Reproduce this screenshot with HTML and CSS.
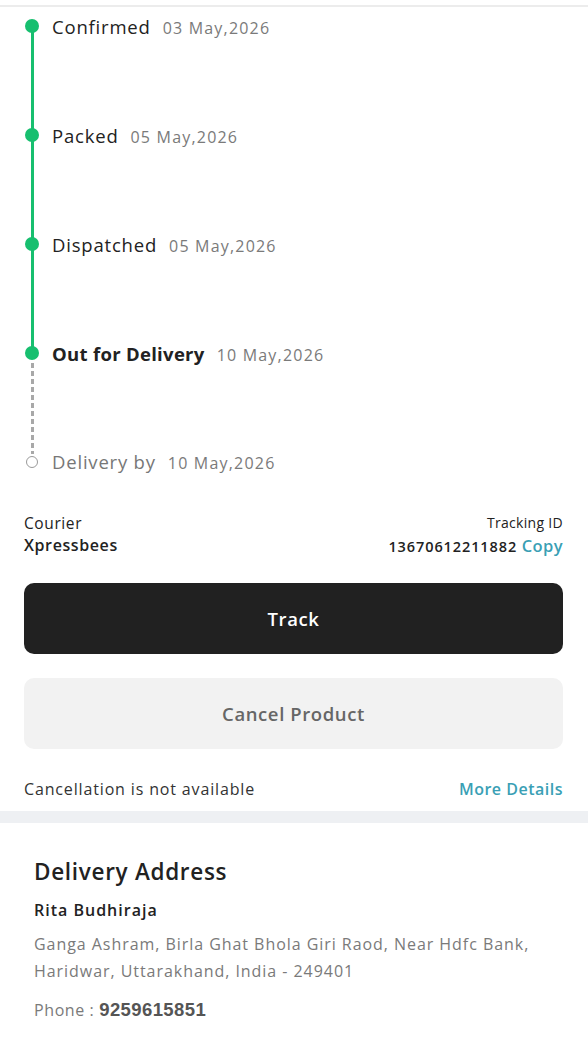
FILE: index.html
```html
<!DOCTYPE html>
<html lang="en">
<head>
    <meta charset="UTF-8">
    <meta name="viewport" content="width=device-width, initial-scale=1.0">
    <title>Order Tracking</title>
    <link rel="stylesheet" href="styles.css">
</head>

<body>
    <div class="topline"></div>

    <!-- Timeline -->
    <section class="timeline">
        <div class="step done">
            <div class="rail"><span class="dot"></span><span class="seg"></span></div>
            <div class="step-text"><span class="label">Confirmed</span><span class="date">03 May,2026</span></div>
        </div>
        <div class="step done">
            <div class="rail"><span class="dot"></span><span class="seg"></span></div>
            <div class="step-text"><span class="label">Packed</span><span class="date">05 May,2026</span></div>
        </div>
        <div class="step done">
            <div class="rail"><span class="dot"></span><span class="seg"></span></div>
            <div class="step-text"><span class="label">Dispatched</span><span class="date">05 May,2026</span></div>
        </div>
        <div class="step current">
            <div class="rail"><span class="dot"></span><span class="seg dashed"></span></div>
            <div class="step-text"><span class="label">Out for Delivery</span><span class="date">10 May,2026</span></div>
        </div>
        <div class="step pending">
            <div class="rail"><span class="ring"></span></div>
            <div class="step-text"><span class="label">Delivery by</span><span class="date">10 May,2026</span></div>
        </div>
    </section>

    <!-- Courier -->
    <section class="courier">
        <div>
            <div class="small">Courier</div>
            <div class="strong">Xpressbees</div>
        </div>
        <div class="right">
            <div class="small">Tracking ID</div>
            <div class="strong">13670612211882 <a href="#" class="link">Copy</a></div>
        </div>
    </section>

    <div class="actions">
        <button class="btn btn-dark">Track</button>
        <button class="btn btn-light">Cancel Product</button>
    </div>

    <div class="cancel-info">
        <span>Cancellation is not available</span>
        <a href="#" class="link">More Details</a>
    </div>

    <div class="band"></div>

    <!-- Delivery Address -->
    <section class="address">
        <h2>Delivery Address</h2>
        <p class="name">Rita Budhiraja</p>
        <p class="addr">Ganga Ashram, Birla Ghat Bhola Giri Raod, Near Hdfc Bank, Haridwar, Uttarakhand, India - 249401</p>
        <p class="phone">Phone : <strong>9259615851</strong></p>
    </section>
</body>
</html>
```

FILE: styles.css
```css
/* General */
body {
    margin: 0;
    font-family: 'Open Sans', 'Noto Sans', sans-serif;
    background: #fff;
    color: #222;
    letter-spacing: 0.6px;
}

.topline {
    margin-top: 5px;
    height: 2px;
    background: #ececec;
}

/* Timeline */
.timeline {
    padding: 12px 0 0 25px;
}

.step {
    display: flex;
    height: 109px;
}

.step.pending {
    height: 14px;
}

.rail {
    width: 14px;
    display: flex;
    flex-direction: column;
    align-items: center;
}

.dot {
    width: 14px;
    height: 14px;
    border-radius: 50%;
    background: #17bf6f;
    flex-shrink: 0;
}

.seg {
    flex: 1;
    width: 3px;
    margin-top: -1px;
    margin-bottom: -1px;
    background: #17bf6f;
}

.seg.dashed {
    background: repeating-linear-gradient(to bottom, #a8a8a8 0 5px, transparent 5px 8px);
    margin-top: 3px;
    margin-bottom: 1px;
}

.ring {
    width: 10px;
    height: 10px;
    margin-top: 1px;
    border: 1.5px solid #9a9a9a;
    border-radius: 50%;
}

.step-text {
    margin-left: 13px;
    padding-top: 1px;
    line-height: 14px;
    display: flex;
    align-items: baseline;
}

.pending .step-text {
    padding-top: 0;
}

.label {
    font-size: 18.5px;
    color: #222;
    letter-spacing: 0.8px;
}

.current .label {
    font-weight: 700;
    letter-spacing: 0.3px;
}

.pending .label {
    color: #777;
}

.date {
    font-size: 16px;
    color: #7a7a7a;
    margin-left: 12px;
    letter-spacing: 1.2px;
}

/* Courier */
.courier {
    display: flex;
    justify-content: space-between;
    padding: 0 25px 0 24px;
    margin-top: 43px;
}

.courier .right {
    text-align: right;
}

.small {
    font-size: 15.5px;
    line-height: 22px;
    color: #222;
}

.courier .right .small {
    font-size: 14px;
    letter-spacing: 0.3px;
}

.strong {
    font-size: 16px;
    line-height: 23px;
    font-weight: 600;
}

.courier .right .strong {
    font-size: 14.5px;
    letter-spacing: 0.9px;
}

.link {
    color: #3a9fb5;
    font-weight: 600;
    text-decoration: none;
}

.courier .right .link {
    font-size: 16.5px;
    letter-spacing: 0.4px;
}

/* Botones */
.actions {
    display: flex;
    flex-direction: column;
    gap: 24px;
    padding: 0 25px 0 24px;
    margin-top: 25px;
}

.btn {
    height: 71px;
    border: none;
    border-radius: 10px;
    font-family: inherit;
    font-size: 18.5px;
    font-weight: 600;
    letter-spacing: 0.6px;
    cursor: pointer;
}

.btn-dark {
    background: #212121;
    color: #fff;
}

.btn-light {
    background: #f2f2f2;
    color: #666;
}

.cancel-info {
    display: flex;
    justify-content: space-between;
    padding: 0 25px 11px 24px;
    margin-top: 29px;
    font-size: 16px;
    line-height: 22px;
    color: #333;
    letter-spacing: 0.85px;
}

.cancel-info .link {
    letter-spacing: 0.5px;
}

.band {
    height: 12px;
    background: #eef0f3;
}

/* Dirección */
.address {
    padding: 34px 34px 0;
}

.address h2 {
    margin: 0;
    font-size: 22.5px;
    line-height: 30px;
    font-weight: 600;
    color: #222;
    letter-spacing: 0.7px;
}

.address p {
    margin: 0;
}

.address .name {
    margin-top: 12px;
    font-size: 16px;
    line-height: 22px;
    font-weight: 600;
    letter-spacing: 1px;
}

.address .addr {
    margin-top: 10px;
    font-size: 16px;
    line-height: 27px;
    color: #7a7a7a;
    letter-spacing: 0.95px;
}

.address .phone {
    margin-top: 14px;
    font-size: 16px;
    line-height: 22px;
    color: #7a7a7a;
}

.address .phone strong {
    font-family: 'Liberation Sans', Arial, sans-serif;
    font-size: 18.5px;
    color: #555;
    letter-spacing: 0.4px;
}
```
